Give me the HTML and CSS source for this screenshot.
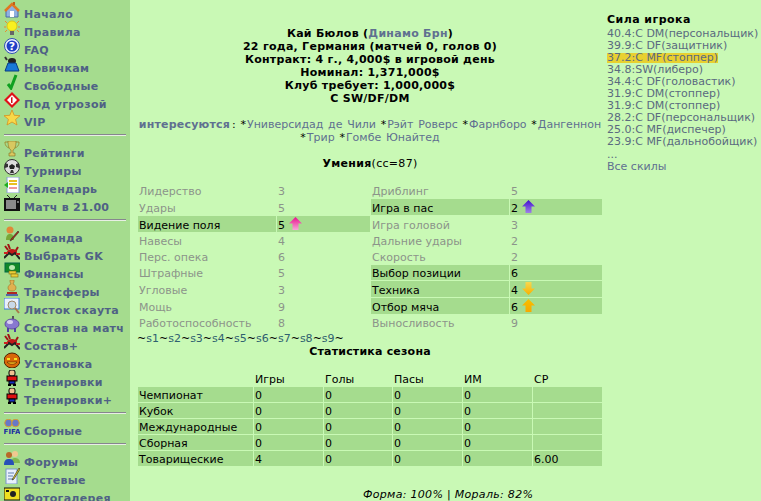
FILE: index.html
```html
<!DOCTYPE HTML>
<html>
<head>
    <meta charset="UTF-8">
    <title>Кай Бюлов</title>
    <link rel="stylesheet" href="styles.css">
</head>
<body>
    <svg class="defs" width="0" height="0">
        <symbol id="crab" viewBox="0 0 16 16">
            <path d="M1 2l3 4M4 0l2 5M14 3l-3 5" stroke="#a01414" stroke-width="2" fill="none"/>
            <ellipse cx="8" cy="8" rx="5" ry="3" fill="#c01818"/>
            <path d="M0 14l5-5 3 2 3-2 5 6" stroke="#222" stroke-width="2" fill="none"/>
            <path d="M0 9h4M12 10h4" stroke="#d02020" stroke-width="2"/>
        </symbol>
        <symbol id="man" viewBox="0 0 16 16">
            <rect x="5" y="0" width="6" height="6" rx="2" fill="#f0c090" stroke="#000"/>
            <rect x="3" y="6" width="10" height="5" fill="#e01010" stroke="#000"/>
            <rect x="5" y="11" width="6" height="3" fill="#1830c0" stroke="#000"/>
            <rect x="4" y="14" width="3" height="2" fill="#000"/>
            <rect x="9" y="14" width="3" height="2" fill="#000"/>
        </symbol>
    </svg>

    <div class="page">
        <div class="menu">
            <a class="menu-item" href="#"><svg class="icon" viewBox="0 0 16 16"><path d="M2 8v7h12V8L8 3z" fill="#8fb0e0" stroke="#4a6aa8"/><path d="M1 9L8 2l7 7" fill="none" stroke="#e07820" stroke-width="2.5"/><rect x="6" y="9" width="4" height="6" fill="#fff"/><rect x="9" y="0" width="2" height="3" fill="#c06018"/></svg>Начало</a>
            <a class="menu-item" href="#"><svg class="icon" viewBox="0 0 16 16"><path d="M1 1l3 3M15 1l-3 3M0 7h2M14 7h2M1 12l2-2M15 12l-2-2" stroke="#e88830"/><circle cx="8" cy="6" r="5" fill="#f8f020" stroke="#d8c818"/><rect x="6" y="11" width="4" height="4" fill="#666"/></svg>Правила</a>
            <a class="menu-item" href="#"><svg class="icon" viewBox="0 0 16 16"><circle cx="8" cy="8" r="7.5" fill="#e8eefc" stroke="#3050b0"/><circle cx="8" cy="8" r="5.5" fill="#2040c8"/><text class="icon-mark" x="8" y="12" font-size="11">?</text></svg>FAQ</a>
            <a class="menu-item" href="#"><svg class="icon" viewBox="0 0 16 16"><path d="M1 1l2 3" stroke="#333" stroke-width="2"/><ellipse cx="8" cy="5" rx="4" ry="3" fill="#222"/><path d="M1 15l3-8h8l3 8z" fill="#1878d8" stroke="#0a3a80"/></svg>Новичкам</a>
            <a class="menu-item" href="#"><svg class="icon" viewBox="0 0 16 16"><path d="M4 10l3 4 5-13" fill="none" stroke="#10a020" stroke-width="3"/></svg>Свободные</a>
            <a class="menu-item" href="#"><svg class="icon" viewBox="0 0 16 16"><path d="M8 0l8 8-8 8-8-8z" fill="#e01018"/><path d="M8 3l5 5-5 5-5-5z" fill="#fff"/><path d="M7 5.5l1.5-.5v6H7z" fill="#d01018"/></svg>Под угрозой</a>
            <a class="menu-item" href="#"><svg class="icon" viewBox="0 0 16 16"><path d="M8 0l2.2 5.3 5.8.4-4.4 3.7 1.4 5.6L8 12l-5 3 1.4-5.6L0 5.700l5.800-.4z" fill="#f8d848" stroke="#d89020" stroke-width=".8"/></svg>VIP</a>
            <div class="menu-sep"></div>
            <a class="menu-item" href="#"><svg class="icon" viewBox="0 0 16 16"><path d="M1 1h3M12 1h3M1 1c0 4 2 5 4 6M15 1c0 4-2 5-4 6" fill="none" stroke="#a09030"/><path d="M4 0h8c0 5-1 8-3 9v3h2v3H5v-3h2V9C5 8 4 5 4 0z" fill="#d8c860" stroke="#807020" stroke-width=".6"/></svg>Рейтинги</a>
            <a class="menu-item" href="#"><svg class="icon" viewBox="0 0 16 16"><circle cx="8" cy="8" r="7.500" fill="#ddd" stroke="#333"/><path d="M8 5l3 2-1 3H6L5 7z" fill="#222"/><path d="M1 4l3 1 0 3-3 1zM15 4l-3 1v3l3 1zM6 14l1-3h2l1 3z" fill="#333"/></svg>Турниры</a>
            <a class="menu-item" href="#"><svg class="icon" viewBox="0 0 16 16"><rect x="3" y="0" width="12" height="16" fill="#fff" stroke="#88a0d0"/><path d="M5 4h8M5 7h8" stroke="#e8c020" stroke-width="2"/><path d="M5 11h8" stroke="#e03030"/><path d="M0 8l4-3v6z" fill="#20b020"/></svg>Календарь</a>
            <a class="menu-item" href="#"><svg class="icon" viewBox="0 0 16 16"><path d="M3 0l4 4M13 0L9 4" stroke="#222"/><rect x="0" y="3" width="16" height="13" fill="#111"/><rect x="2" y="5" width="10" height="9" fill="#8a8a8a"/><rect x="13" y="6" width="2" height="2" fill="#777"/></svg>Матч в 21.00</a>
            <div class="menu-sep"></div>
            <a class="menu-item" href="#"><svg class="icon" viewBox="0 0 16 16"><circle cx="6" cy="4" r="3.500" fill="#e08838"/><path d="M2 14c0-5 2-6 4-6s4 1 4 6z" fill="#78a838"/><path d="M15 6L8 14l-2 1 1-2 7-8z" fill="#b02818" stroke="#222" stroke-width=".5"/></svg>Команда</a>
            <a class="menu-item" href="#"><svg class="icon"><use href="#crab"/></svg>Выбрать GK</a>
            <a class="menu-item" href="#"><svg class="icon" viewBox="0 0 16 16"><rect x="1" y="1" width="15" height="9" fill="#108828" stroke="#064"/><ellipse cx="8" cy="5.500" rx="3" ry="2.500" fill="#b8e8b0"/><rect x="5" y="9" width="7" height="3" fill="#e8d038" stroke="#806810" stroke-width=".6"/><rect x="7" y="12" width="7" height="3" fill="#e8d038" stroke="#806810" stroke-width=".6"/></svg>Финансы</a>
            <a class="menu-item" href="#"><svg class="icon" viewBox="0 0 16 16"><path d="M6 0h4v2l-1 2c2 1 3 2 3 4 0 2-2 3-4 3s-4-1-4-3c0-2 1-3 3-4L6 2z" fill="#e0b050" stroke="#a07020" stroke-width=".6"/><rect x="3" y="12" width="10" height="2" fill="#b02820"/><rect x="2" y="14" width="12" height="2" fill="#5068a8"/></svg>Трансферы</a>
            <a class="menu-item" href="#"><svg class="icon" viewBox="0 0 16 16"><rect x="0" y="0" width="15" height="11" fill="#e8f0fc" stroke="#3878d0"/><circle cx="8" cy="7" r="4" fill="#c8d8e8" stroke="#a08868"/><path d="M11 10l4 5" stroke="#a87848" stroke-width="2"/></svg>Листок скаута</a>
            <a class="menu-item" href="#"><svg class="icon" viewBox="0 0 16 16"><path d="M9 0v3" stroke="#555" stroke-width="2"/><ellipse cx="8" cy="8" rx="7" ry="5" fill="#8878d0" stroke="#6050a0"/><ellipse cx="6" cy="6" rx="3" ry="2" fill="#d8d0f0"/><path d="M4 12v4M11 12v4" stroke="#5040a0" stroke-width="2"/></svg>Состав на матч</a>
            <a class="menu-item" href="#"><svg class="icon"><use href="#crab"/></svg>Состав+</a>
            <a class="menu-item" href="#"><svg class="icon" viewBox="0 0 16 16"><ellipse cx="8" cy="8.500" rx="8" ry="7.500" fill="#d86808" stroke="#502000"/><path d="M3 6h3v2H3zM10 6h3v2h-3z" fill="#f8e020"/><path d="M3 10c2 3 8 3 10 0z" fill="#f8c020" stroke="#502000" stroke-width=".6"/></svg>Установка</a>
            <a class="menu-item" href="#"><svg class="icon"><use href="#man"/></svg>Тренировки</a>
            <a class="menu-item" href="#"><svg class="icon"><use href="#man"/></svg>Тренировки+</a>
            <div class="menu-sep"></div>
            <a class="menu-item" href="#"><svg class="icon" viewBox="0 0 16 16"><circle cx="4.500" cy="4" r="3.800" fill="#6878c8" stroke="#d8a030"/><circle cx="11.500" cy="4" r="3.800" fill="#6878c8" stroke="#d8a030"/><text class="icon-fifa" x="8" y="15" font-size="7">FIFA</text></svg>Сборные</a>
            <div class="menu-sep"></div>
            <a class="menu-item" href="#"><svg class="icon" viewBox="0 0 16 16"><circle cx="11" cy="4" r="3" fill="#f0c890"/><path d="M7 13c0-4 2-5 4-5s5 1 5 5z" fill="#80b850"/><circle cx="5" cy="5" r="3" fill="#b86828"/><path d="M0 15c0-5 2-6 5-6s5 1 5 6z" fill="#2850b8"/></svg>Форумы</a>
            <a class="menu-item" href="#"><svg class="icon" viewBox="0 0 16 16"><rect x="2" y="1" width="11" height="15" fill="#e8f0fc" stroke="#7898c8"/><path d="M4 5h6M4 8h5M4 11h6" stroke="#6080b0"/><path d="M15 0L9 10l-1 2 2-1 6-10z" fill="#e8d020" stroke="#222" stroke-width=".6"/></svg>Гостевые</a>
            <a class="menu-item" href="#"><svg class="icon" viewBox="0 0 16 16"><rect x="0" y="2" width="16" height="12" fill="#f0e020" stroke="#111"/><circle cx="9" cy="8" r="3" fill="#222"/><rect x="2" y="4" width="3" height="2" fill="#111"/></svg>Фотогалерея</a>
        </div>

        <div class="content">
            <div class="info">
                Кай Бюлов (<a class="link" href="#">Динамо Брн</a>)<br>
                22 года, Германия (матчей 0, голов 0)<br>
                Контракт: 4 г., 4,000$ в игровой день<br>
                Номинал: 1,371,000$<br>
                Клуб требует: 1,000,000$<br>
                C SW/DF/DM
            </div>
            <div class="interest">
                <a class="link interest-title" href="#">интересуются</a>: <span class="star">*</span><a class="link" href="#">Универсидад де Чили</a> <span class="star">*</span><a class="link" href="#">Рэйт Роверс</a> <span class="star">*</span><a class="link" href="#">Фарнборо</a> <span class="star">*</span><a class="link" href="#">Дангеннон</a><br>
                <span class="star">*</span><a class="link" href="#">Трир</a> <span class="star">*</span><a class="link" href="#">Гомбе Юнайтед</a>
            </div>
            <div class="skills-title"><b>Умения</b>(сс=87)</div>

            <table class="skills">
                <colgroup><col class="col-name"><col class="col-val"><col class="col-name"><col class="col-val2"></colgroup>
                <tr>
                    <td>Лидерство</td><td>3</td>
                    <td>Дриблинг</td><td>5</td>
                </tr>
                <tr class="tall">
                    <td>Удары</td><td>5</td>
                    <td class="hl">Игра в пас</td><td class="hl">2 <svg class="arrow" viewBox="0 0 13 13"><defs><linearGradient id="ga" x1="0" y1="0" x2="0" y2="1"><stop offset="0" stop-color="#4010d0"/><stop offset="1" stop-color="#a080e8"/></linearGradient></defs><path d="M6.500 0L13 6.500H9.500V13h-6V6.500H0z" fill="url(#ga)"/></svg></td>
                </tr>
                <tr class="tall">
                    <td class="hl">Видение поля</td><td class="hl">5 <svg class="arrow" viewBox="0 0 13 13"><defs><linearGradient id="gb" x1="0" y1="0" x2="0" y2="1"><stop offset="0" stop-color="#e8108c"/><stop offset="1" stop-color="#f8a8d8"/></linearGradient></defs><path d="M6.500 0L13 6.500H9.500V13h-6V6.500H0z" fill="url(#gb)"/></svg></td>
                    <td>Игра головой</td><td>3</td>
                </tr>
                <tr>
                    <td>Навесы</td><td>4</td>
                    <td>Дальние удары</td><td>2</td>
                </tr>
                <tr>
                    <td>Перс. опека</td><td>6</td>
                    <td>Скорость</td><td>2</td>
                </tr>
                <tr>
                    <td>Штрафные</td><td>5</td>
                    <td class="hl">Выбор позиции</td><td class="hl">6</td>
                </tr>
                <tr class="tall">
                    <td>Угловые</td><td>3</td>
                    <td class="hl">Техника</td><td class="hl">4 <svg class="arrow" viewBox="0 0 13 13"><defs><linearGradient id="gc" x1="0" y1="0" x2="0" y2="1"><stop offset="0" stop-color="#f8d850"/><stop offset="1" stop-color="#f8b000"/></linearGradient></defs><path d="M6.500 13L13 6.500H9.500V0h-6v6.500H0z" fill="url(#gc)"/></svg></td>
                </tr>
                <tr class="tall">
                    <td>Мощь</td><td>9</td>
                    <td class="hl">Отбор мяча</td><td class="hl">6 <svg class="arrow" viewBox="0 0 13 13"><defs><linearGradient id="gd" x1="0" y1="0" x2="0" y2="1"><stop offset="0" stop-color="#f8c000"/><stop offset="1" stop-color="#f8a800"/></linearGradient></defs><path d="M6.500 0L13 6.500H9.500V13h-6V6.500H0z" fill="url(#gd)"/></svg></td>
                </tr>
                <tr>
                    <td>Работоспособность</td><td>8</td>
                    <td>Выносливость</td><td>9</td>
                </tr>
            </table>

            <div class="seasons">~<a class="link2" href="#">s1</a>~<a class="link2" href="#">s2</a>~<a class="link2" href="#">s3</a>~<a class="link2" href="#">s4</a>~<a class="link2" href="#">s5</a>~<a class="link2" href="#">s6</a>~<a class="link2" href="#">s7</a>~<a class="link2" href="#">s8</a>~<a class="link2" href="#">s9</a>~</div>
            <div class="stats-title">Статистика сезона</div>

            <table class="stats">
                <colgroup><col class="col-first"><col class="col-n"><col class="col-n2"><col class="col-n"><col class="col-n"><col class="col-n"></colgroup>
                <tr class="head"><td></td><td>Игры</td><td>Голы</td><td>Пасы</td><td>ИМ</td><td>СР</td></tr>
                <tr><td>Чемпионат</td><td>0</td><td>0</td><td>0</td><td>0</td><td></td></tr>
                <tr><td>Кубок</td><td>0</td><td>0</td><td>0</td><td>0</td><td></td></tr>
                <tr><td>Международные</td><td>0</td><td>0</td><td>0</td><td>0</td><td></td></tr>
                <tr><td>Сборная</td><td>0</td><td>0</td><td>0</td><td>0</td><td></td></tr>
                <tr><td>Товарищеские</td><td>4</td><td>0</td><td>0</td><td>0</td><td>6.00</td></tr>
            </table>

            <div class="form-line">Форма: 100% | Мораль: 82%</div>
        </div>

        <div class="side">
            <div class="side-title">Сила игрока</div>
            <div>40.4:C DM(персональщик)</div>
            <div>39.9:C DF(защитник)</div>
            <div><span class="current">37.2:C MF(стоппер)</span></div>
            <div>34.8:SW(либеро)</div>
            <div>34.4:C DF(головастик)</div>
            <div>31.9:C DM(стоппер)</div>
            <div>31.9:C DM(стоппер)</div>
            <div>28.2:C DF(персональщик)</div>
            <div>25.0:C MF(диспечер)</div>
            <div>23.9:C MF(дальнобойщик)</div>
            <div class="more">...</div>
            <div><a class="link" href="#">Все скилы</a></div>
        </div>
    </div>
</body>
</html>
```

FILE: styles.css
```css
html, body {
    height: 100%;
    margin: 0;
    overflow: hidden;
}

body {
    background-color: #c9f9b5;
    color: #000;
    font-family: "DejaVu Sans", Verdana, sans-serif;
    font-size: 11px;
    line-height: 13px;
}

.defs {
    display: none;
}

.page {
    display: flex;
    align-items: flex-start;
}

a {
    text-decoration: none;
}

.link {
    color: #5f7090;
}

.link2 {
    color: #2f6070;
}

/* left menu */
.menu {
    flex: none;
    width: 130px;
    height: 520px;
    padding-top: 5px;
    background-color: #a5dc8e;
}

.menu-item {
    display: flex;
    align-items: flex-start;
    box-sizing: border-box;
    height: 18px;
    padding-top: 1px;
    line-height: 18px;
    color: #4f6185;
    font-weight: bold;
    letter-spacing: .3px;
    white-space: nowrap;
}

.icon {
    flex: none;
    width: 16px;
    height: 16px;
    margin: -4px 4px 0 4px;
}

.icon-mark {
    fill: #fff;
    font-weight: bold;
    text-anchor: middle;
}

.icon-fifa {
    fill: #2030a0;
    font-weight: bold;
    letter-spacing: 0;
    text-anchor: middle;
}

.menu-sep {
    height: 13px;
    margin: 0 4px;
    box-sizing: border-box;
    padding-top: 3px;
}

.menu-sep::before {
    content: "";
    display: block;
    height: 1px;
    background-color: #86868e;
    border-bottom: 1px solid #e8efe4;
}

/* middle column */
.content {
    flex: none;
    width: 466px;
    margin-left: 7px;
    padding-top: 27px;
}

.info {
    text-align: center;
    font-weight: bold;
    letter-spacing: .27px;
}

.interest {
    margin-top: 13px;
    text-align: center;
    word-spacing: 1.2px;
    white-space: nowrap;
}

.interest-title {
    margin-right: 2px;
    font-weight: bold;
    letter-spacing: .2px;
}

.star {
    letter-spacing: 1px;
}

.skills-title {
    margin-top: 13px;
    text-align: center;
    letter-spacing: .3px;
}

table {
    width: 466px;
    table-layout: fixed;
    border-collapse: separate;
    border-spacing: 1px;
}

td {
    height: 15px;
    padding: 1px 0 0 1px;
    box-sizing: border-box;
    white-space: nowrap;
}

.skills {
    margin-top: 12px;
    color: #8c948a;
}

.tall td {
    height: 16px;
    padding-top: 2px;
}

.col-name {
    width: 138px;
}

.col-val {
    width: 93px;
}

.col-val2 {
    width: 92px;
}

.skills .hl {
    background-color: #a5dc8e;
    color: #000;
}

.arrow {
    width: 13px;
    height: 13px;
    margin-top: -4px;
    vertical-align: -1px;
}

.seasons {
    margin-top: 1px;
}

.stats-title {
    text-align: center;
    font-weight: bold;
    letter-spacing: .2px;
}

.stats {
    margin-top: 12px;
}

.stats td {
    background-color: #a5dc8e;
}

.stats .head td {
    background-color: transparent;
}

.col-first {
    width: 115px;
}

.col-n {
    width: 69px;
}

.col-n2 {
    width: 68px;
}

.form-line {
    margin-top: 21px;
    padding-left: 226px;
    font-style: italic;
    letter-spacing: .3px;
    white-space: nowrap;
}

/* right column */
.side {
    flex: none;
    width: 154px;
    margin-left: 4px;
    padding-top: 14px;
    line-height: 12px;
    color: #5a6a80;
    white-space: nowrap;
}

.side-title {
    margin-bottom: 2px;
    color: #000;
    font-weight: bold;
    letter-spacing: .45px;
}

.more {
    margin-top: 1px;
}

.current {
    display: inline-block;
    height: 10px;
    line-height: 10px;
    background-color: #e8d030;
}
```
